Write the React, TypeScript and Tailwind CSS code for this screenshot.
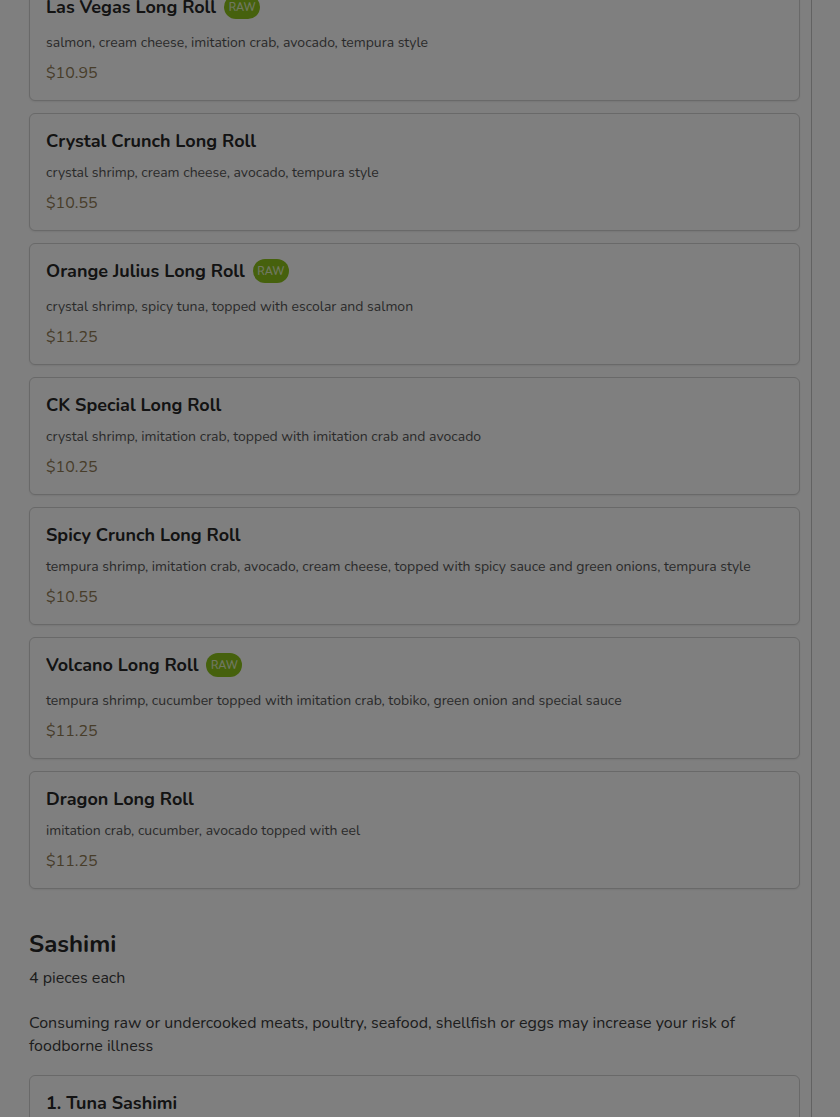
import React from "react";

type Item = { name: string; desc: string; price: string; raw?: boolean };

const items: Item[] = [
  { name: "Las Vegas Long Roll", desc: "salmon, cream cheese, imitation crab, avocado, tempura style", price: "$10.95", raw: true },
  { name: "Crystal Crunch Long Roll", desc: "crystal shrimp, cream cheese, avocado, tempura style", price: "$10.55" },
  { name: "Orange Julius Long Roll", desc: "crystal shrimp, spicy tuna, topped with escolar and salmon", price: "$11.25", raw: true },
  { name: "CK Special Long Roll", desc: "crystal shrimp, imitation crab, topped with imitation crab and avocado", price: "$10.25" },
  { name: "Spicy Crunch Long Roll", desc: "tempura shrimp, imitation crab, avocado, cream cheese, topped with spicy sauce and green onions, tempura style", price: "$10.55" },
  { name: "Volcano Long Roll", desc: "tempura shrimp, cucumber topped with imitation crab, tobiko, green onion and special sauce", price: "$11.25", raw: true },
  { name: "Dragon Long Roll", desc: "imitation crab, cucumber, avocado topped with eel", price: "$11.25" },
];

function Card({ item, first }: { item: Item; first?: boolean }) {
  return (
    <div
      className={`rounded-md border border-[#d2d2d2] bg-white px-4 pt-[13px] pb-[15px] shadow-[0_1px_2px_rgba(0,0,0,0.08)] ${first ? "mt-[-21px]" : ""}`}
    >
      <div className={`flex items-center gap-2 h-7 ${item.raw ? "mb-3" : "mb-2"}`}>
        <span className="text-[18px] font-bold leading-7 text-[#262626]">{item.name}</span>
        {item.raw && (
          <span className="inline-flex items-center justify-center h-6 w-9 rounded-full bg-[#8cc31a] text-white/75 text-[11px] font-semibold leading-none pt-px">
            RAW
          </span>
        )}
      </div>
      <p className="text-[14px] leading-5 text-[#555555] mb-2">{item.desc}</p>
      <p className="text-[16px] leading-6 text-[#8f7a55]">{item.price}</p>
    </div>
  );
}

export default function App() {
  return (
    <div
      className="relative h-[1117px] overflow-hidden bg-white"
      style={{ fontFamily: '"Nunito", "Lato", "Noto Sans", sans-serif' }}
    >
      <div className="flex h-full">
        <div className="w-[812px] shrink-0 border-r border-[#c4c4c4] pl-[29px] pr-[11px]">
          <div className="flex flex-col gap-3">
            {items.map((it, i) => (
              <Card key={it.name} item={it} first={i === 0} />
            ))}
          </div>
          <h2 className="mt-[37px] text-[24px] font-bold leading-9 text-[#262626]">Sashimi</h2>
          <p className="mt-1 text-[16px] leading-6 text-[#3a3a3a]">4 pieces each</p>
          <p className="mt-[22px] text-[16px] leading-[23px] text-[#3a3a3a]">
            Consuming raw or undercooked meats, poultry, seafood, shellfish or eggs may increase your risk of foodborne illness
          </p>
          <div className="mt-[17px] rounded-md border border-[#d2d2d2] bg-white px-4 pt-[13px] pb-[15px]">
            <div className="h-7 flex items-center mb-2">
              <span className="text-[18px] font-bold leading-7 text-[#262626]">1. Tuna Sashimi</span>
            </div>
            <p className="text-[14px] leading-5 text-[#555555] mb-2">&nbsp;</p>
          </div>
        </div>
        <div className="flex-1" />
      </div>
      <div className="absolute inset-0 bg-black/50" />
    </div>
  );
}
